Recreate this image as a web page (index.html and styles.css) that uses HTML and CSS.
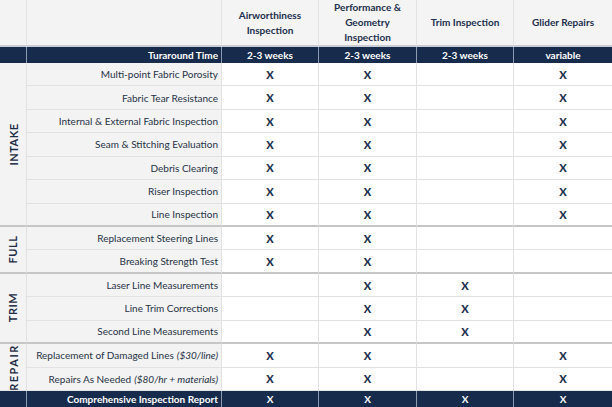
FILE: index.html
```html
<!DOCTYPE html>
<html>
<head>
<meta charset="utf-8">
<link rel="stylesheet" href="styles.css">
</head>
<body>
<div class="grid">
  <div class="cell hd side"></div>
  <div class="cell hd lbl"></div>
  <div class="cell hd col">Airworthiness<br>Inspection</div>
  <div class="cell hd col">Performance &amp;<br>Geometry<br>Inspection</div>
  <div class="cell hd col">Trim Inspection</div>
  <div class="cell hd col last">Glider Repairs</div>

  <div class="cell dk side"></div>
  <div class="cell dk lbl">Turaround Time</div>
  <div class="cell dk">2-3 weeks</div>
  <div class="cell dk">2-3 weeks</div>
  <div class="cell dk">2-3 weeks</div>
  <div class="cell dk last">variable</div>

  <div class="cell sec span7 end"><span class="vt">INTAKE</span></div>
  <div class="cell lbl">Multi-point Fabric Porosity</div>
  <div class="cell x">X</div><div class="cell x">X</div><div class="cell x"></div><div class="cell x last">X</div>
  <div class="cell lbl">Fabric Tear Resistance</div>
  <div class="cell x">X</div><div class="cell x">X</div><div class="cell x"></div><div class="cell x last">X</div>
  <div class="cell lbl">Internal &amp; External Fabric Inspection</div>
  <div class="cell x">X</div><div class="cell x">X</div><div class="cell x"></div><div class="cell x last">X</div>
  <div class="cell lbl">Seam &amp; Stitching Evaluation</div>
  <div class="cell x">X</div><div class="cell x">X</div><div class="cell x"></div><div class="cell x last">X</div>
  <div class="cell lbl">Debris Clearing</div>
  <div class="cell x">X</div><div class="cell x">X</div><div class="cell x"></div><div class="cell x last">X</div>
  <div class="cell lbl">Riser Inspection</div>
  <div class="cell x">X</div><div class="cell x">X</div><div class="cell x"></div><div class="cell x last">X</div>
  <div class="cell lbl end">Line Inspection</div>
  <div class="cell x end">X</div><div class="cell x end">X</div><div class="cell x end"></div><div class="cell x last end">X</div>

  <div class="cell sec span2 end"><span class="vt">FULL</span></div>
  <div class="cell lbl">Replacement Steering Lines</div>
  <div class="cell x">X</div><div class="cell x">X</div><div class="cell x"></div><div class="cell x last"></div>
  <div class="cell lbl end">Breaking Strength Test</div>
  <div class="cell x end">X</div><div class="cell x end">X</div><div class="cell x end"></div><div class="cell x last end"></div>

  <div class="cell sec span3 end"><span class="vt">TRIM</span></div>
  <div class="cell lbl">Laser Line Measurements</div>
  <div class="cell x"></div><div class="cell x">X</div><div class="cell x">X</div><div class="cell x last"></div>
  <div class="cell lbl">Line Trim Corrections</div>
  <div class="cell x"></div><div class="cell x">X</div><div class="cell x">X</div><div class="cell x last"></div>
  <div class="cell lbl end">Second Line Measurements</div>
  <div class="cell x end"></div><div class="cell x end">X</div><div class="cell x end">X</div><div class="cell x last end"></div>

  <div class="cell sec span2"><span class="vt wide">REPAIR</span></div>
  <div class="cell lbl">Replacement of Damaged Lines <i>($30/line)</i></div>
  <div class="cell x">X</div><div class="cell x">X</div><div class="cell x"></div><div class="cell x last">X</div>
  <div class="cell lbl">Repairs As Needed <i>($80/hr + materials)</i></div>
  <div class="cell x">X</div><div class="cell x">X</div><div class="cell x"></div><div class="cell x last">X</div>

  <div class="cell dk side"></div>
  <div class="cell dk lbl">Comprehensive Inspection Report</div>
  <div class="cell dk">X</div>
  <div class="cell dk">X</div>
  <div class="cell dk">X</div>
  <div class="cell dk last">X</div>
</div>
</body>
</html>
```

FILE: styles.css
```css
* { box-sizing: border-box; }
html, body { margin: 0; padding: 0; background: #ffffff; }
body {
  font-family: Lato, "Open Sans", sans-serif;
  color: #2b3950;
}
.grid {
  display: grid;
  width: 612px;
  height: 407px;
  grid-template-columns: 27px 195px 97px 98px 97px 98px;
  grid-template-rows: 47px 16px repeat(14, 23.43fr) 16px;
}
.cell {
  border-right: 1px solid #e2e2e2;
  border-bottom: 1px solid #e2e2e2;
  display: flex;
  align-items: center;
  justify-content: center;
  font-size: 10px;
  background: #ffffff;
  overflow: hidden;
}
.cell.last { border-right: none; }
.cell.end { border-bottom: 2px solid #c6c6c6; }
.hd {
  background: #f4f4f4;
  font-weight: 700;
  color: #1c2f4e;
  text-align: center;
  line-height: 15px;
  border-bottom: 2px solid #c9ced6;
}
.side { background: #f3f3f3; }
.lbl {
  background: #f3f3f3;
  justify-content: flex-end;
  padding-right: 3px;
  color: #263246;
  white-space: nowrap;
}
.x {
  font-weight: 900;
  font-size: 11px;
  color: #1c2f4e;
}
.dk {
  background: #172c4c;
  color: #ffffff;
  font-weight: 700;
  border-right: 1px solid #8d9ab0;
  border-bottom: none;
}
.dk.last { border-right: none; }
.sec {
  background: #f3f3f3;
  flex-direction: column;
}
.span7 { grid-row: span 7; }
.span3 { grid-row: span 3; }
.span2 { grid-row: span 2; }
.vt {
  transform: rotate(-90deg);
  font-weight: 700;
  font-size: 11px;
  color: #1f2d44;
  white-space: nowrap;
  letter-spacing: 0.5px;
}
.vt.wide { letter-spacing: 1.5px; }
i { font-style: italic; margin-left: 3px; }
```
